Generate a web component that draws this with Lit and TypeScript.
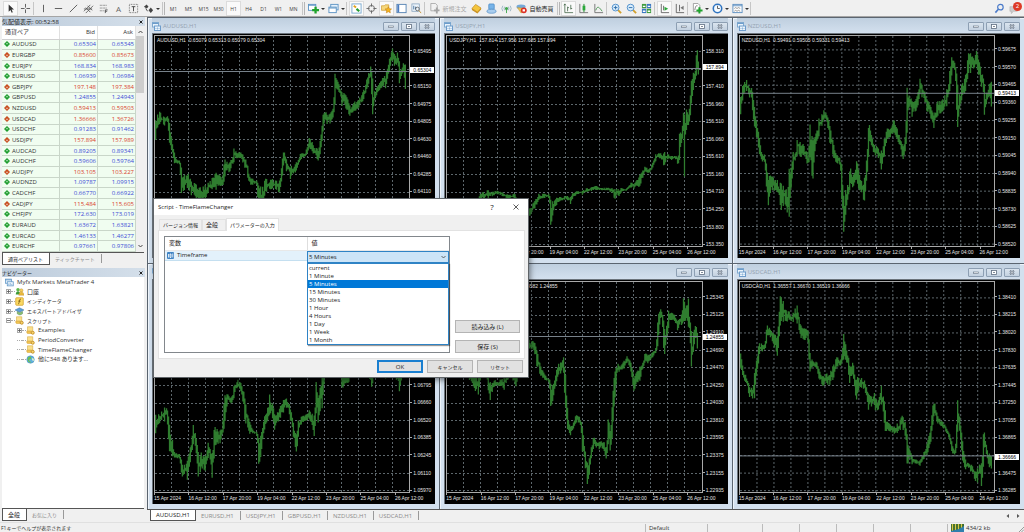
import { LitElement, html, css, svg, nothing } from "lit";
import { customElement, property } from "lit/decorators.js";
import { classMap } from "lit/directives/class-map.js";
import { styleMap } from "lit/directives/style-map.js";

type Bar = [number, number, number];

interface Chart {
  symbol: string;
  quote: string;
  scale: string[];
  price?: string;
  priceAt: number;
  high?: boolean;
  origin: [number, number];
  bars: Bar[];
}

const PLOT_W = 770;
const PLOT_H = 634;
const TIMES = ["15 Apr 2024", "16 Apr 12:00", "17 Apr 20:00", "19 Apr 04:00", "22 Apr 12:00", "23 Apr 20:00", "25 Apr 04:00", "26 Apr 12:00"];

const CHARTS: Chart[] = [
  {
    symbol: "AUDUSD,H1", quote: "0.65079 0.65313 0.65079 0.65304", price: "0.65304", priceAt: 106, origin: [12, 46],
    scale: ["0.65495", "", "0.65150", "0.64975", "0.64805", "0.64630", "0.64460", "0.64285", "0.64110", "0.63940", "0.63765", "0.63595"],
    bars: [[12,300,370],[16,280,330],[25,270,310],[35,285,315],[48,285,305],[52,320,365],[58,340,395],[65,360,420],[68,415,430],[85,420,435],[90,460,520],[97,465,515],[110,460,510],[120,480,520],[130,485,530],[145,500,545],[155,500,545],[162,490,540],[170,490,520],[185,470,510],[195,455,500],[205,460,500],[215,470,515],[220,415,450],[235,430,460],[248,385,430],[255,390,415],[265,395,415],[275,400,420],[285,415,445],[292,440,480],[300,475,495],[318,480,495],[322,490,560],[335,500,560],[345,475,520],[360,475,510],[375,480,510],[388,480,520],[395,420,470],[400,388,430],[408,420,455],[420,440,470],[435,430,460],[450,400,420],[465,400,410],[478,350,385],[488,370,400],[500,385,420],[508,380,410],[514,320,380],[518,280,320],[525,275,300],[540,280,310],[550,260,295],[555,155,220],[565,185,210],[575,210,245],[590,225,270],[600,255,290],[612,245,275],[625,240,265],[640,210,245],[655,165,200],[664,130,170],[668,240,290],[675,210,240],[685,195,215],[695,180,205],[712,150,190],[720,110,150],[728,80,120],[735,100,140],[745,90,130],[750,140,190],[762,125,155],[769,130,220]],
  },
  {
    symbol: "USDJPY,H1", quote: "157.814 157.956 157.685 157.894", price: "157.894", priceAt: 97, origin: [25, 46],
    scale: ["158.310", "", "157.410", "156.960", "156.510", "156.060", "155.610", "155.160", "154.710", "154.250", "153.800", "153.350"],
    bars: [[25,560,575],[115,540,550],[125,520,535],[133,515,540],[145,510,530],[160,515,530],[175,512,522],[190,518,530],[210,525,538],[228,520,535],[240,550,580],[275,565,590],[290,540,560],[300,520,540],[315,522,535],[332,520,535],[335,535,570],[338,570,645],[343,545,570],[352,535,560],[365,530,545],[385,528,540],[398,530,550],[402,520,540],[415,515,525],[435,512,522],[445,505,518],[460,502,512],[475,498,512],[490,505,512],[505,503,512],[520,505,515],[528,505,535],[540,508,530],[550,505,515],[565,508,514],[580,488,505],[595,485,500],[605,470,505],[615,450,480],[622,440,455],[635,448,460],[645,430,445],[655,400,420],[665,400,412],[680,395,440],[690,400,420],[700,408,418],[715,408,418],[724,405,430],[727,340,370],[735,310,370],[739,275,330],[742,280,475],[746,270,310],[752,260,330],[758,240,290],[763,180,220],[768,155,185],[775,150,165],[779,80,155],[782,80,165],[786,138,165]],
  },
  {
    symbol: "NZDUSD,H1", quote: "0.59491 0.59505 0.59331 0.59413", price: "0.59413", priceAt: 173, high: true, origin: [25, 46],
    scale: ["0.59675", "0.59570", "0.59465", "0.59360", "0.59255", "0.59150", "0.59045", "0.58940", "0.58835", "0.58730", "0.58625", "0.58520"],
    bars: [[25,230,290],[30,200,235],[35,165,220],[42,170,215],[50,195,225],[58,200,235],[65,245,320],[72,290,350],[78,310,380],[83,390,415],[90,405,425],[98,400,430],[103,430,500],[108,470,565],[115,460,530],[122,470,510],[130,480,515],[137,475,520],[145,480,560],[153,490,560],[162,500,560],[168,520,590],[171,430,635],[176,430,475],[183,395,455],[190,400,425],[197,350,400],[205,365,410],[215,370,405],[225,390,430],[230,400,460],[235,310,370],[243,340,525],[248,340,370],[255,330,370],[262,295,350],[270,280,320],[277,265,300],[288,285,310],[297,320,370],[305,360,410],[315,405,430],[325,410,435],[332,420,560],[338,570,660],[343,510,560],[350,490,545],[357,440,490],[365,470,510],[375,410,480],[383,450,520],[392,485,520],[400,470,550],[407,410,480],[413,300,370],[418,330,370],[427,370,400],[440,380,405],[450,390,455],[460,350,400],[468,325,360],[478,325,355],[488,295,340],[497,320,355],[505,340,375],[515,385,415],[525,340,380],[528,190,260],[535,225,265],[545,240,280],[555,240,275],[563,205,260],[568,170,230],[575,195,225],[583,210,250],[592,240,270],[602,260,300],[610,285,325],[620,240,290],[635,240,275],[648,210,265],[658,140,220],[665,105,150],[673,125,150],[678,90,280],[681,260,330],[687,220,280],[695,190,230],[705,170,220],[715,95,160],[722,90,140],[730,110,150],[738,85,130],[745,110,170],[752,140,190],[758,120,220],[763,230,285],[770,210,240],[778,190,230],[784,175,260]],
  },
  {
    symbol: "EURUSD,H1", quote: "1.06939 1.06984 1.06900 1.06939", priceAt: -1, origin: [462, -281],
    scale: ["1.07485", "1.07350", "1.07210", "1.07070", "1.06935", "1.06795", "1.06660", "1.06520", "1.06385", "1.06245", "1.06110", "1.05970"],
    bars: [[462,120,185],[470,115,150],[480,105,140],[490,95,130],[497,85,130],[500,130,190],[505,160,255],[512,180,250],[518,235,250],[535,235,255],[542,270,310],[550,270,300],[557,260,325],[565,230,270],[572,180,220],[575,140,190],[582,170,215],[587,200,240],[592,230,330],[600,230,280],[610,245,290],[620,200,250],[628,225,260],[633,230,315],[640,150,210],[648,160,205],[656,160,215],[665,150,190],[670,60,100],[680,55,75],[692,65,90],[700,30,60],[710,10,35],[718,20,45],[728,40,80],[735,80,150],[745,130,170],[755,165,175],[770,170,185],[775,200,295],[782,170,230],[790,130,170],[800,100,145],[808,45,120],[815,80,120],[820,110,180],[830,110,145],[840,90,130],[848,75,115],[858,70,100],[868,85,125],[875,120,150],[880,160,200],[887,180,245],[893,135,165],[903,125,150],[915,120,140],[928,105,135],[938,120,160],[942,110,190],[948,20,100],[955,70,130],[965,-10,120],[975,-100,-60],[1000,-50,-20],[1020,-20,10],[1030,0,35],[1045,0,25],[1060,-40,-10],[1100,-30,0],[1117,-10,40],[1125,-40,-10],[1190,-30,10],[1200,-10,50],[1208,-60,-10],[1220,-80,-40]],
  },
  {
    symbol: "GBPUSD,H1", quote: "1.24868 1.24920 1.24582 1.24855", price: "1.24855", priceAt: 166, origin: [25, 64],
    scale: ["1.25345", "1.25125", "1.24910", "1.24690", "1.24470", "1.24250", "1.24030", "1.23810", "1.23595", "1.23375", "1.23155", "1.22935"],
    bars: [[25,300,340],[60,300,340],[100,340,370],[107,350,390],[118,340,415],[125,320,350],[145,330,360],[153,360,425],[165,360,380],[185,358,378],[195,350,395],[210,320,345],[230,340,380],[240,300,330],[270,235,265],[280,240,270],[290,245,275],[297,270,320],[305,310,345],[320,345,360],[333,350,370],[338,380,460],[345,370,410],[352,340,380],[360,310,345],[368,300,345],[375,270,320],[380,340,430],[383,430,490],[388,480,510],[395,500,525],[405,490,510],[413,465,490],[425,470,490],[432,500,555],[437,540,590],[443,580,640],[448,600,680],[454,590,640],[460,560,585],[467,530,560],[475,545,565],[485,545,565],[497,545,570],[505,555,600],[512,465,550],[518,500,560],[523,440,510],[528,330,410],[532,325,395],[540,310,330],[550,315,330],[560,300,325],[567,285,310],[578,300,325],[585,330,380],[592,345,380],[600,330,370],[607,320,365],[615,310,330],[623,275,305],[632,285,305],[645,275,295],[655,260,280],[662,170,220],[668,140,175],[675,150,180],[680,220,300],[687,200,245],[693,150,180],[700,155,180],[710,160,180],[722,180,205],[732,165,195],[740,100,190],[745,150,185],[754,100,200],[758,180,230],[763,280,320],[770,200,240],[776,185,215],[782,215,290]],
  },
  {
    symbol: "USDCAD,H1", quote: "1.36557 1.36670 1.36519 1.36666", price: "1.36666", priceAt: 525, origin: [25, 64],
    scale: ["1.38410", "1.38215", "1.38020", "1.37830", "1.37635", "1.37445", "1.37250", "1.37055", "1.36865", "", "1.36475", "1.36285"],
    bars: [[25,280,330],[30,320,345],[40,340,370],[50,375,405],[58,380,410],[66,340,430],[72,300,360],[80,245,285],[90,250,275],[98,250,270],[105,190,225],[115,205,235],[125,220,255],[137,220,295],[140,140,210],[145,100,165],[153,110,185],[162,145,185],[172,150,180],[183,160,185],[195,125,190],[205,190,220],[218,200,245],[228,195,240],[235,280,335],[242,300,320],[255,300,325],[263,330,360],[275,345,380],[285,340,370],[297,330,365],[305,310,360],[315,290,320],[328,295,320],[337,215,300],[345,260,300],[355,320,370],[365,300,345],[375,350,430],[380,350,400],[390,350,385],[400,360,385],[412,400,450],[422,410,440],[430,395,440],[440,430,455],[450,365,430],[457,405,460],[463,480,520],[475,490,515],[490,500,525],[500,490,515],[508,475,515],[515,465,490],[525,485,550],[528,560,615],[535,565,600],[545,595,610],[555,600,612],[568,600,622],[580,575,600],[590,545,575],[600,510,560],[605,440,500],[612,425,460],[620,465,490],[635,485,500],[645,495,515],[655,515,535],[665,560,580],[675,570,595],[678,470,560],[682,420,470],[687,460,510],[692,520,560],[697,580,605],[705,610,630],[715,610,625],[725,615,635],[735,635,665],[742,625,670],[750,610,640],[754,600,680],[760,520,580],[764,515,550],[770,570,595],[777,580,625],[784,585,628]],
  },
];

/* Hourly high/low sticks interpolated between the key bars, each with a little deterministic noise. */
function sticks(chart: Chart): string {
  const [ox, oy] = chart.origin;
  const out: string[] = [];
  let seed = 7;
  const rand = () => (seed = (seed * 16807) % 2147483647) / 2147483647;
  let k = 0;
  let prev = NaN;
  const end = chart.bars[chart.bars.length - 1][0];
  for (let x = chart.bars[0][0]; x <= end; x += 3) {
    while (k < chart.bars.length - 2 && chart.bars[k + 1][0] <= x) k++;
    const a = chart.bars[k];
    const b = chart.bars[k + 1];
    const t = Math.min(1, (x - a[0]) / (b[0] - a[0]));
    const top = a[1] + (b[1] - a[1]) * t;
    const bottom = a[2] + (b[2] - a[2]) * t;
    const near = t < 0.25 || t > 0.85;
    const span = bottom - top;
    let hi = top + span * rand() * (near ? 0.15 : 0.5);
    let lo = bottom - span * rand() * (near ? 0.15 : 0.5);
    if (rand() > 0.9) lo += span * 0.3;
    if (!Number.isNaN(prev)) {
      if (prev < hi) hi = prev;
      if (prev > lo) lo = prev;
    }
    prev = hi + (lo - hi) * (0.3 + rand() * 0.4);
    out.push(`M${x - ox + 2} ${(hi - oy).toFixed(0)}V${(lo - oy).toFixed(0)}`);
  }
  return out.join("");
}

const FONT = css`
  * { box-sizing: border-box; }
  button, select, input { font: inherit; color: inherit; margin: 0; padding: 0; border: 0; background: none; border-radius: 0; appearance: none; }
  svg { display: block; }
`;

@customElement("chart-window")
class ChartWindow extends LitElement {
  @property({ attribute: false }) chart!: Chart;

  static styles = [FONT, css`
    :host { display: flex; flex-direction: column; min-width: 0; min-height: 0; padding: 0 4px 5px 4px; background: #d3e0ee; border-left: 1px solid #5b6570; border-top: 1px solid #5b6570; box-shadow: inset 1px 1px 0 #eef4fa; }
    .title { display: flex; align-items: center; gap: 2px; height: 15px; padding-top: 1px; flex: none; color: #94a2b1; background: linear-gradient(#bfcfdf, #d3e0ee); font-size: 6px; }
    .title svg { width: 9px; height: 9px; }
    .name { flex: 1; }
    .ctl { width: 16px; height: 9px; border: 1px solid #8d9fb3; border-radius: 1px; background: linear-gradient(#dbe5ef, #c3d1e0); display: grid; place-items: center; }
    .ctl svg { width: 6px; height: 5px; }
    .body { flex: 1; min-height: 0; background: #000; color: #e4e4e4; font: 5px/6px "Liberation Sans", Arial, sans-serif; display: grid; grid-template-columns: minmax(0, 1fr) 25px; grid-template-rows: minmax(0, 1fr) 11px; padding: 1px 0 0 1px; border-left: 1px solid #6c747c; border-top: 1px solid #6c747c; }
    .plot { grid-area: 1 / 1; min-width: 0; min-height: 0; position: relative; border: 1px solid #a9a9a9; }
    .plot svg { width: 100%; height: 100%; }
    .quote { position: absolute; left: 2px; top: 1px; white-space: pre; }
    .scale { grid-area: 1 / 2 / 3 / 3; display: flex; flex-direction: column; padding: 7px 0 5px 0; }
    .scale.high { padding-top: 5px; }
    .tick { flex: 1; display: flex; align-items: center; gap: 1px; }
    .tick::before { content: ""; width: 2px; border-top: 1px solid #a9a9a9; }
    .area { grid-area: 1 / 2; position: relative; }
    .price { position: absolute; left: 0; right: 1px; margin-top: -3px; background: #fff; color: #000; padding-left: 3px; }
    .times { grid-area: 2 / 1 / 3 / 3; display: grid; grid-template-columns: repeat(8, minmax(0, 1fr)); padding-right: 6px; }
    .time { white-space: nowrap; padding-top: 2px; position: relative; }
    .time::before { content: ""; position: absolute; left: 0; top: 0; height: 2px; border-left: 1px solid #a9a9a9; }
  `];

  render() {
    const c = this.chart;
    const first = c.high ? 42 : 48;
    const step = c.high ? 53.3 : 52.9;
    return html`
      <div class="title">
        <svg viewBox="0 0 9 9"><rect x=".5" y=".5" width="6" height="4.5" fill="#eaf4fc" stroke="#7fa9cf"/><path d="M.5 1.5h6" stroke="#6d9ccb"/><rect x="2.5" y="4" width="6" height="4.5" fill="#eaf4fc" stroke="#6d9ccb"/><path d="M4 7V6M5.5 7.5V5.500M7 7V6" stroke="#6d9ccb" stroke-width=".7"/></svg>
        <span class="name">${c.symbol}</span>
        <button class="ctl" aria-label="Minimize"><svg viewBox="0 0 6 5"><rect x=".5" y="2" width="5" height="1.500" fill="#fff" stroke="#5f6e80" stroke-width=".6"/></svg></button>
        <button class="ctl" aria-label="Maximize"><svg viewBox="0 0 6 5"><rect x=".5" y=".5" width="5" height="4" fill="#fff" stroke="#5f6e80" stroke-width=".8"/><path d="M2 2.500h2" stroke="#5f6e80" stroke-width=".8"/></svg></button>
        <button class="ctl" aria-label="Close"><svg viewBox="0 0 6 5"><path d="M1 .5l4 4M5 .5l-4 4" stroke="#5f6e80" stroke-width="1.800"/><path d="M1 .5l4 4M5 .5l-4 4" stroke="#fff" stroke-width=".7"/></svg></button>
      </div>
      <div class="body">
        <div class="plot">
          <svg viewBox="0 0 ${PLOT_W} ${PLOT_H}" preserveAspectRatio="none">
            <g stroke="#5d676c" stroke-width="1" stroke-dasharray="2 2" shape-rendering="crispEdges">
              ${Array.from({ length: 14 }, (_, i) => svg`<path vector-effect="non-scaling-stroke" d="M${(i + 1) * 51.4} 0V${PLOT_H}"/>`)}
              ${Array.from({ length: 12 }, (_, i) => svg`<path vector-effect="non-scaling-stroke" d="M0 ${first + i * step}H${PLOT_W}"/>`)}
            </g>
            <path d=${sticks(c)} fill="none" stroke="#2f7d2f" stroke-width="1.300" vector-effect="non-scaling-stroke"/>
            ${c.price ? svg`<path vector-effect="non-scaling-stroke" shape-rendering="crispEdges" stroke="#77818a" d="M0 ${c.priceAt}H${PLOT_W}"/>` : nothing}
          </svg>
          <div class="quote">${c.symbol}  ${c.quote}</div>
        </div>
        <div class=${classMap({ scale: true, high: !!c.high })}>${c.scale.map((s) => html`<div class="tick">${s}</div>`)}</div>
        <div class="area">${c.price ? html`<div class="price" style=${styleMap({ top: `${(c.priceAt / PLOT_H) * 100}%` })}>${c.price}</div>` : nothing}</div>
        <div class="times">${TIMES.map((t) => html`<div class="time">${t}</div>`)}</div>
      </div>`;
  }
}

const ICONS: Record<string, unknown> = {
  cursor: svg`<path d="M4 1.500v8l2-2 1.300 3 1.200-.5-1.300-2.900h2.600z" fill="#333"/>`,
  cross: svg`<path d="M6 1v4M6 7v4M1 6h4M7 6h4" stroke="#555"/>`,
  vline: svg`<path d="M6 2v8" stroke="#555"/>`,
  hline: svg`<path d="M2 6h8" stroke="#555"/>`,
  trend: svg`<path d="M2 10l8-8" stroke="#555"/>`,
  channel: svg`<path d="M1 9l7-7M3 11l8-8M3 5l5 5M5 3l5 5M1 6.500h9" stroke="#555" stroke-width=".9"/>`,
  fibo: svg`<path d="M2 2.500h8M2 5.500h8M2 8.500h5" stroke="#777" stroke-dasharray="1 .6"/><path d="M8 11V7.500h2.500M8 9h2" stroke="#444" fill="none" stroke-width=".9"/>`,
  label: svg`<rect x="1.500" y="1.500" width="9" height="9" fill="none" stroke="#777" stroke-dasharray="1 .8"/><path d="M4 4h4M6 4v5" stroke="#444"/>`,
  arrows: svg`<path d="M1 4l3-2.500L6 4 4 6z" fill="#444"/><path d="M6 8l2.500-3L11 8l-2.500 3z" fill="#444"/><path d="M3 6l2 3" stroke="#444"/>`,
  newchart: svg`<rect x=".5" y="1.500" width="8" height="6.500" fill="#fff" stroke="#5b93c4"/><path d="M.5 2.500h8" stroke="#5b93c4"/><path d="M7 4h2.500v2.500H12V9H9.500v2.500H7V9H4.500V6.500H7z" fill="#1fa32c"/>`,
  profiles: svg`<rect x="3" y="1.500" width="8" height="6" fill="#e6f2fc" stroke="#5b93c4"/><rect x="1" y="4.500" width="8" height="6" fill="#fff" stroke="#5b93c4"/><path d="M1 5.500h8" stroke="#5b93c4"/>`,
  market: svg`<rect x="1" y="1" width="10" height="10" fill="#fff" stroke="#78a8cf"/><path d="M3 3l2.500 2" stroke="#e0a21b" stroke-width="2"/><path d="M6 6.500l3 2.500" stroke="#239b30" stroke-width="2.400"/>`,
  target: svg`<circle cx="6" cy="6" r="3.300" fill="none" stroke="#666"/><path d="M6 .5v3.500M6 8v3.500M.5 6H4M8 6h3.500" stroke="#666"/>`,
  navigator: svg`<path d="M.5 3h3l1-1h4v6h-8z" fill="#f6d77a" stroke="#c9952a" stroke-width=".7"/><path d="M8 4l1 2.200 2.500.3-1.800 1.700.5 2.500L8 9.500l-2.200 1.200.5-2.500L4.500 6.500 7 6.200z" fill="#f5b521" stroke="#c07a0e" stroke-width=".6"/>`,
  terminal: svg`<rect x="1" y="1.500" width="10" height="9" fill="#fff" stroke="#5583b3"/><path d="M2.500 2v8" stroke="#4a7cc0" stroke-width="2"/>`,
  tester: svg`<rect x="1" y="1" width="8" height="8" fill="#eef5fb" stroke="#7d9cba" stroke-width=".8"/><path d="M3 7V3M5 7V4" stroke="#45729f"/><circle cx="7" cy="6.500" r="2" fill="none" stroke="#555" stroke-width=".8"/><path d="M8.500 8l2.500 3" stroke="#c49232"/>`,
  order: svg`<path d="M2 .5h5l2 2v6H2z" fill="#f2f2f2" stroke="#999" stroke-width=".8"/><path d="M7.500 5h2v2h2v2h-2v2.500h-2V9h-2V7h2z" fill="#a5a5a5"/>`,
  gold: svg`<path d="M1 6l4-4.500 6 4-4 4.500z" fill="#f4c53d" stroke="#bd8415" stroke-width=".7"/><path d="M1 6v1.500l6 4V10zM7 10v1.500l4-4.500V5.500z" fill="#c98f1a"/>`,
  editor: svg`<rect x="3" y="1" width="6" height="6" rx="1" fill="#78b4e8" stroke="#3c7fbf" stroke-width=".7"/><ellipse cx="6" cy="9" rx="5" ry="2.200" fill="#a9cdee" stroke="#4e8cc4" stroke-width=".7"/>`,
  signal: svg`<path d="M2 3a5 5 0 000 6M10 3a5 5 0 010 6M4 4a3.500 3.500 0 000 4M8 4a3.500 3.500 0 010 4" stroke="#9ab5c4" fill="none"/><circle cx="6" cy="6" r="1.700" fill="#3fa54b"/><path d="M6 7v4" stroke="#3fa54b"/>`,
  auto: svg`<ellipse cx="5.500" cy="4" rx="5" ry="2.500" fill="#74a9d8"/><path d="M1.500 5l4 6 5-5z" fill="#f0c552" stroke="#b98d28" stroke-width=".5"/><circle cx="8.500" cy="8" r="3.200" fill="#dc2f24"/><rect x="7.200" y="6.800" width="2.600" height="2.400" fill="#fff"/>`,
  bars: svg`<path d="M2 1v9.500h9M2 1L1 2.500M2 1l1 1.500M5 9V4M5 5h1.500M8.500 7V2M8.500 6H10" stroke="#4a6b4e" fill="none" stroke-width=".9"/>`,
  candles: svg`<path d="M2 1v9.500h9" stroke="#666" fill="none" stroke-width=".9"/><path d="M6.500 1v9" stroke="#1f8a2c"/><rect x="5" y="3" width="3" height="5" fill="#2ba83a"/>`,
  line: svg`<path d="M2 1v9.500h9" stroke="#666" fill="none" stroke-width=".9"/><path d="M3 8c2-6 4-3 7 1" stroke="#3b8d45" fill="none" stroke-width=".9"/>`,
  zoomin: svg`<path d="M7.500 7.500L11 11" stroke="#d2a02d" stroke-width="2"/><circle cx="5" cy="5" r="3.700" fill="#d8ecfb" stroke="#4b8cc9"/><path d="M3 5h4M5 3v4" stroke="#2e6cab"/>`,
  zoomout: svg`<path d="M7.500 7.500L11 11" stroke="#d2a02d" stroke-width="2"/><circle cx="5" cy="5" r="3.700" fill="#d8ecfb" stroke="#4b8cc9"/><path d="M3 5h4" stroke="#2e6cab"/>`,
  tile: svg`<rect x="1" y="1" width="4.700" height="4.700" fill="#3f9c3f"/><rect x="6.300" y="1" width="4.700" height="4.700" fill="#3a78c2"/><rect x="1" y="6.300" width="4.700" height="4.700" fill="#3a78c2"/><rect x="6.300" y="6.300" width="4.700" height="4.700" fill="#3f9c3f"/><path d="M2 3.700h2.800M7.300 3.700h2.800M2 9h2.800M7.300 9h2.800" stroke="#fff" stroke-width="1.500"/>`,
  scroll: svg`<path d="M2.500 1v9.500H11M5 8V3" stroke="#555" fill="none" stroke-width=".9"/><path d="M6 4l4 2.300L6 8.500z" fill="#2ba83a"/>`,
  shift: svg`<path d="M2.500 1v9.500H11M6 9V2" stroke="#555" fill="none" stroke-width=".9"/><path d="M10.500 3L7 5.200l3.500 2.300z" fill="#777"/>`,
  indicators: svg`<path d="M1.500.5h5l2 2v7h-7z" fill="#fff" stroke="#888" stroke-width=".8"/><path d="M3 8c1-6 2-5 3-5" stroke="#555" fill="none" stroke-width=".8"/><path d="M7 4.500h2.200V7h2.300v2.200H9.200v2.300H7V9.200H4.800V7H7z" fill="#1fa32c"/>`,
  clock: svg`<circle cx="6" cy="6" r="4.600" fill="#f4faff" stroke="#2f74c0" stroke-width="1.700"/><path d="M6 3v3h2.500" stroke="#555" fill="none"/>`,
  template: svg`<rect x="1" y="1.500" width="10" height="9" fill="#fff" stroke="#5b8ec0"/><path d="M1 3h10" stroke="#5b8ec0"/><path d="M2.500 6l1.500-1 1.500 1L7 5l2 1M2.500 9L4 8l1.500 1L7 8l2 1" stroke="#777" fill="none" stroke-width=".8"/>`,
  search: svg`<circle cx="7" cy="4.500" r="3" fill="none" stroke="#4a7ac9" stroke-width="1.300"/><path d="M5 6.500L1.500 10.500" stroke="#4a7ac9" stroke-width="1.700"/>`,
  bubble: svg`<path d="M1 4h8v5H5l-2.500 2.500V9H1z" fill="#ccc" stroke="#aaa" stroke-width=".6"/>`,
  terminals: svg`<rect x=".5" y="1.500" width="8" height="5.500" fill="#eaf4fc" stroke="#5b93c4"/><path d="M.5 2.500h8" stroke="#5b93c4"/><rect x="3" y="5" width="8" height="5.500" fill="#eaf4fc" stroke="#5b93c4"/><path d="M5 9V7.500M7 9V7M9 9V8" stroke="#5b93c4"/>`,
  account: svg`<circle cx="4" cy="3.500" r="2.300" fill="#5cb848"/><path d="M1 10c0-6 6-6 6 0z" fill="#3c9a37"/><circle cx="8.500" cy="4.500" r="2.200" fill="#f4ce5c" stroke="#b6882a" stroke-width=".5"/><path d="M5 11c0-6 7-6 7 0z" fill="#e9b93a" stroke="#b6882a" stroke-width=".5"/>`,
  indicator: svg`<rect x="1" y="1" width="10" height="10" rx="1" fill="#fbd964" stroke="#cf9c22"/><path d="M8 3c-2-.5-2 1-2.300 3S5 9.500 4 9M4.500 5.500h3" stroke="#6a4a00" fill="none"/>`,
  expert: svg`<path d="M0 4l6-3 6 3-6 3z" fill="#5d9fd6" stroke="#356fa5" stroke-width=".6"/><path d="M3 6v3c2 2 5 2 7 0V6L6 7.500z" fill="#8bbf6e" stroke="#4b8054" stroke-width=".6"/>`,
  script: svg`<path d="M2 1h7v6H2z" fill="#fbe08b" stroke="#d2a53a" stroke-width=".7"/><path d="M1 7h6v3H2.500A1.500 1.500 0 011 8.500z" fill="#f3c54f" stroke="#c9952a" stroke-width=".6"/><circle cx="9" cy="9" r="2" fill="#f8d36a" stroke="#b8831a"/>`,
  globe: svg`<circle cx="6" cy="6" r="5" fill="#5fb0dd" stroke="#3b83b5" stroke-width=".6"/><path d="M3 3c2-2 4-1 4 1S4 5 4 7s3 1 3 3c-4 1-6-4-4-7z" fill="#6cc04f"/><path d="M8 4l2.500 1v3L8 7z" fill="#d8f0c8"/>`,
};

const icon = (name: string) => html`<svg class="icon" viewBox="0 0 12 12" fill="none" aria-hidden="true">${ICONS[name]}</svg>`;

interface Tool { icon?: string; text?: string; name: string; caret?: boolean; on?: boolean; wide?: boolean; off?: boolean; letter?: boolean; period?: boolean }

const TOOLS: (Tool | "|" | "||")[] = [
  { icon: "cursor", name: "Cursor", on: true }, { icon: "cross", name: "Crosshair" }, "|",
  { icon: "vline", name: "Vertical line" }, { icon: "hline", name: "Horizontal line" }, { icon: "trend", name: "Trendline" },
  { icon: "channel", name: "Channel" }, { icon: "fibo", name: "Fibonacci" }, { text: "A", name: "Text", letter: true },
  { icon: "label", name: "Text label" }, { icon: "arrows", name: "Arrows", caret: true }, "||",
  ...["M1", "M5", "M15", "M30", "H1", "H4", "D1", "W1", "MN"].map((t) => ({ text: t, name: t, on: t === "H1", period: true })), "||",
  { icon: "newchart", name: "New chart", caret: true }, { icon: "profiles", name: "Profiles", caret: true }, "|",
  { icon: "market", name: "Market watch", on: true }, { icon: "target", name: "Data window" }, { icon: "navigator", name: "Navigator", on: true },
  { icon: "terminal", name: "Terminal" }, { icon: "tester", name: "Strategy tester" }, "|",
  { icon: "order", text: "新規注文", name: "新規注文", wide: true, off: true }, { icon: "gold", name: "MetaEditor" }, { icon: "editor", name: "Hosting" },
  { icon: "signal", name: "Signals" }, { icon: "auto", text: "自動売買", name: "自動売買", wide: true }, "||",
  { icon: "bars", name: "Bar chart", on: true }, { icon: "candles", name: "Candlesticks" }, { icon: "line", name: "Line chart" }, "|",
  { icon: "zoomin", name: "Zoom in" }, { icon: "zoomout", name: "Zoom out" }, { icon: "tile", name: "Tile windows" }, "|",
  { icon: "scroll", name: "Auto scroll", on: true }, { icon: "shift", name: "Chart shift" }, "|",
  { icon: "indicators", name: "Indicators", caret: true }, { icon: "clock", name: "Periods", caret: true }, { icon: "template", name: "Templates", caret: true }, "|",
];

const QUOTES: [string, string, string, boolean][] = [
  ["AUDUSD", "0.65304", "0.65345", true], ["EURGBP", "0.85600", "0.85673", false], ["EURJPY", "168.834", "168.983", true],
  ["EURUSD", "1.06939", "1.06984", true], ["GBPJPY", "197.148", "197.384", false], ["GBPUSD", "1.24855", "1.24943", true],
  ["NZDUSD", "0.59413", "0.59503", false], ["USDCAD", "1.36666", "1.36726", false], ["USDCHF", "0.91283", "0.91462", true],
  ["USDJPY", "157.894", "157.989", false], ["AUDCAD", "0.89205", "0.89341", true], ["AUDCHF", "0.59606", "0.59764", true],
  ["AUDJPY", "103.105", "103.227", false], ["AUDNZD", "1.09787", "1.09915", true], ["CADCHF", "0.66770", "0.66922", true],
  ["CADJPY", "115.484", "115.605", false], ["CHFJPY", "172.630", "173.019", true], ["EURAUD", "1.63672", "1.63821", true],
  ["EURCAD", "1.46133", "1.46277", true], ["EURCHF", "0.97661", "0.97806", true],
];

const TREE: [number, string, string, string, boolean?][] = [
  [0, "", "terminals", "Myfx Markets MetaTrader 4"], [1, "+", "account", "口座"], [1, "+", "indicator", "インディケータ", true],
  [1, "+", "expert", "エキスパートアドバイザ", true], [1, "−", "script", "スクリプト", true], [2, "+", "script", "Examples"],
  [2, "", "script", "PeriodConverter"], [2, "", "script", "TimeFlameChanger"], [2, "", "globe", "他に348 あります..."],
];

const FRAMES = ["current", "1 Minute", "5 Minutes", "15 Minutes", "30 Minutes", "1 Hour", "4 Hours", "1 Day", "1 Week", "1 Month"];

@customElement("app-root")
class AppRoot extends LitElement {
  static styles = [FONT, css`
    :host { display: flex; flex-direction: column; height: 100vh; position: relative; overflow: hidden; background: #f0f0f0; color: #333; font: 6px/8px "Open Sans", "Noto Sans CJK JP", sans-serif; font-feature-settings: "palt"; }
    .icon { width: 11px; height: 11px; flex: none; }
    .kana { font-size: 5px; font-feature-settings: normal; }

    .toolbar { display: flex; align-items: center; height: 17px; flex: none; padding: 1px 4px 0 3px; border-bottom: 1px solid #a5a5a5; }
    .tool { display: flex; align-items: center; justify-content: center; width: 15px; height: 15px; flex: none; color: #666; }
    .tool.on { background: #fafafa; box-shadow: inset 0 0 0 1px #dcdcdc; }
    .tool.caret { width: 20px; gap: 2px; }
    .tool.caret::after { content: ""; border: 2px solid transparent; border-top-color: #333; border-bottom: 0; }
    .tool.wide { width: 42px; gap: 2px; color: #222; }
    .tool.off { color: #aaa; }
    .tool.period { font-size: 5px; color: #444; }
    .tool.letter { font-size: 8px; }
    .sep { width: 3px; height: 13px; flex: none; border-left: 1px solid #c6c6c6; }
    .sep.grip { width: 5px; border-left: 0; background: linear-gradient(90deg, transparent 1px, #c6c6c6 1px 2px, transparent 2px 3px, #b5b5b5 3px 4px, transparent 4px); }
    .right { margin-left: auto; display: flex; gap: 4px; }
    .note { position: relative; }
    .badge { position: absolute; left: 4px; top: -1px; width: 9px; height: 9px; border-radius: 50%; background: #dd3a26; color: #fff; text-align: center; }

    .main { flex: 1; min-height: 0; display: grid; grid-template-columns: 147px minmax(0, 1fr); }
    .side { display: flex; flex-direction: column; min-height: 0; padding: 0 2px 1px 2px; }
    .bar { display: flex; align-items: center; justify-content: space-between; height: 9px; flex: none; background: linear-gradient(90deg, #bccbdb, #d4dfea); color: #222; }
    .bar button { width: 9px; height: 8px; display: grid; place-items: center; }
    .bar svg { width: 4px; height: 4px; }
    .market { display: flex; height: 227px; flex: none; background: #fff; border-bottom: 1px solid #555; margin-right: 1px; }
    .quotes { flex: 1; border-collapse: collapse; height: 226px; table-layout: fixed; }
    .quotes th { font-weight: 400; text-align: left; padding: 0 2px 0 3px; height: 13px; border-right: 1px solid #e0e0e0; border-bottom: 1px solid #d0d0d0; }
    .quotes td { padding: 0 1px 0 2px; background: #f0fdf0; border-right: 1px solid #c9d6c9; border-bottom: 1px solid #c9d6c9; }
    .quotes .num { text-align: right; width: 38px; }
    .up .num { color: #3a49d6; }
    .down .num { color: #d9412b; }
    .pair { display: flex; align-items: center; gap: 2px; }
    .pair svg { width: 6px; height: 6px; }
    .scroll { width: 8px; display: flex; flex-direction: column; align-items: center; justify-content: space-between; background: #f0f0f0; padding: 4px 0; }
    .scroll svg { width: 5px; height: 4px; flex: none; }
    .thumb { width: 8px; height: 57px; background: #cdcdcd; margin: 2px 0 auto; }
    .tabs { display: flex; height: 12px; flex: none; color: #8a8a8a; }
    .tabs button { padding: 0 6px 0 5px; border-right: 1px solid #999; margin: 1px 0 2px; line-height: 8px; }
    .tabs .active { color: #222; background: #fff; border: 1px solid #555; border-top: 0; margin: 0; }
    .navbar { margin-top: 3px; }
    .tree { flex: 1; min-height: 0; margin: 0 1px 0 0; padding: 0 3px; background: #fff; border-bottom: 1px solid #555; list-style: none; display: grid; grid-auto-rows: 10px 9px 10px; align-content: start; }
    .node { display: flex; align-items: center; gap: 3px; white-space: nowrap; }
    .node .icon { width: 9px; height: 9px; }
    .d1 { padding-left: 1px; }
    .d2 { padding-left: 12px; }
    .box { width: 5px; height: 5px; border: 1px solid #aaa; background: #fff; color: #444; display: grid; place-items: center; }
    .box svg { width: 3px; height: 3px; }
    .stub { width: 5px; border-top: 1px dotted #aaa; }
    .link { border-top: 1px dotted #aaa; width: 4px; margin: 0 -3px; }

    .work { display: flex; flex-direction: column; min-width: 0; min-height: 0; }
    .windows { flex: 1; min-height: 0; display: grid; grid-template-columns: repeat(3, minmax(0, 1fr)); grid-template-rows: repeat(2, minmax(0, 1fr)); border-bottom: 1px solid #555; }
    .work .tabs { padding-left: 3px; padding-right: 4px; }
    .work .tabs .active { margin-bottom: 1px; padding-right: 5px; }
    .arrows { margin-left: auto; display: flex; align-items: center; gap: 8px; }
    .arrows svg { width: 3px; height: 4px; }

    .status { display: flex; align-items: center; height: 10px; flex: none; color: #333; border-top: 1px solid #e0e0e0; }
    .status span { border-left: 1px solid #bbb; height: 8px; width: 37px; padding-left: 3px; }
    .status .help { flex: 1; border: 0; padding-left: 1px; }
    .status .profile { width: 62px; }
    .status .bar-info { width: 55px; }
    .status .net { width: 77px; display: flex; align-items: center; gap: 2px; }
    .net svg { width: 13px; height: 8px; }
    .net .grip { margin-left: auto; width: 6px; }

    .dialog { position: absolute; left: 154px; top: 199px; width: 374px; background: #f0f0f0; outline: 1px solid #5f6468; box-shadow: 2px 3px 6px rgba(0, 0, 0, .5); color: #222; }
    .caption { display: flex; align-items: center; height: 16px; padding-left: 4px; background: #fff; }
    .caption b { font-weight: 400; flex: 1; }
    .caption button { width: 24px; height: 15px; display: grid; place-items: center; font-size: 8px; }
    .caption svg { width: 6px; height: 6px; }
    .pages { display: flex; align-items: flex-end; padding: 3px 0 0 5px; }
    .pages button { height: 11px; padding: 0 3px; border: 1px solid #e2e2e2; border-bottom: 0; }
    .pages .last { padding-right: 7px; }
    .pages .active { height: 13px; background: #fff; margin-bottom: -1px; }
    .page { display: flex; gap: 5px; height: 129px; margin: 0 3px 0 4px; padding: 5px 4px 5px 5px; background: #fff; border: 1px solid #e2e2e2; }
    .inputs { flex: 1; position: relative; border: 1px solid #82878c; }
    .params { width: 100%; border-collapse: collapse; table-layout: fixed; }
    .params th { font-weight: 400; text-align: left; height: 13px; padding: 0 4px; border-bottom: 1px solid #e8e8e8; }
    .params th + th { border-left: 1px solid #dedede; }
    .params td { padding: 0; height: 12px; vertical-align: top; }
    .var { display: flex; align-items: center; gap: 3px; height: 10px; padding-left: 2px; background: #e3f1fb; border-bottom: 1px solid #c4dff0; }
    .var svg { width: 7px; height: 7px; }
    .pick { position: relative; }
    .pick select { display: block; width: 100%; height: 12px; padding: 0 1px; background: #cce4f7; border: 1px solid #2f83c5; }
    .pick svg { position: absolute; right: 3px; top: 4px; width: 5px; height: 4px; }
    .list { position: absolute; right: 0; left: 142px; top: 26px; margin: 0; padding: 0; list-style: none; background: #fff; border: 1px solid #2f83c5; box-shadow: 1px 1px 1px rgba(0, 0, 0, .4); }
    .list li { height: 8px; padding-left: 1px; }
    .list .sel { background: #0078d7; color: #fff; }
    .files { width: 65px; display: flex; flex-direction: column; justify-content: flex-end; gap: 7px; }
    .btn { height: 13px; background: #e1e1e1; border: 1px solid #b4b4b4; }
    .foot { display: flex; justify-content: flex-end; gap: 4px; padding: 1px 5px 4px; }
    .foot .btn { width: 46px; }
    .foot .ok { border: 2px solid #1a7fd0; }
  `];

  private tool(t: Tool | "|" | "||") {
    if (t === "|" || t === "||") return html`<span class=${classMap({ sep: true, grip: t === "||" })}></span>`;
    return html`<button class=${classMap({ tool: true, on: !!t.on, caret: !!t.caret, wide: !!t.wide, off: !!t.off, letter: !!t.letter, period: !!t.period })} aria-label=${t.name}>${t.icon ? icon(t.icon) : nothing}${t.text ?? nothing}</button>`;
  }

  private close() {
    return html`<svg viewBox="0 0 4 4"><path d="M.5.5l3 3M3.500.5l-3 3" stroke="#222"/></svg>`;
  }

  render() {
    return html`
      <div class="toolbar">
        ${TOOLS.map((t) => this.tool(t))}
        <div class="right">${icon("search")}<div class="note">${icon("bubble")}<span class="badge">2</span></div></div>
      </div>
      <div class="main">
        <div class="side">
          <div class="bar"><span>気配値表示: 00:52:58</span><button aria-label="Close">${this.close()}</button></div>
          <div class="market">
            <table class="quotes">
              <thead><tr><th>通貨ペア</th><th class="num">Bid</th><th class="num">Ask</th></tr></thead>
              <tbody>${QUOTES.map(([pair, bid, ask, up]) => html`
                <tr class=${up ? "up" : "down"}>
                  <td><div class="pair"><svg viewBox="0 0 6 6"><path d="M3 0l3 3-3 3-3-3z" fill=${up ? "#1c9c2c" : "#c74a1b"}/><path d=${up ? "M3 1.500l1.500 1.800h-3z" : "M3 4.500L1.500 2.700h3z"} fill="#fff" opacity=".6"/></svg>${pair}</div></td>
                  <td class="num">${bid}</td><td class="num">${ask}</td>
                </tr>`)}
              </tbody>
            </table>
            <div class="scroll">
              <svg viewBox="0 0 5 4"><path d="M.5 3l2-2 2 2" fill="none" stroke="#444"/></svg>
              <div class="thumb"></div>
              <svg viewBox="0 0 5 4"><path d="M.5 1l2 2 2-2" fill="none" stroke="#444"/></svg>
            </div>
          </div>
          <div class="tabs"><button class="active kana">通貨ペアリスト</button><button class="kana">ティックチャート</button></div>
          <div class="bar navbar"><span class="kana">ナビゲーター</span><button aria-label="Close">${this.close()}</button></div>
          <ul class="tree">
            ${TREE.map(([depth, sign, name, text, kana]) => html`
              <li class="node d${depth}">
                ${sign ? html`<span class="box"><svg viewBox="0 0 3 3"><path d=${sign === "+" ? "M0 1.500h3M1.500 0v3" : "M0 1.500h3"} stroke="#555" stroke-width=".8"/></svg></span><span class="link"></span>`
                  : depth ? html`<span class="stub"></span><span class="link"></span>` : nothing}
                ${icon(name)}<span class=${kana ? "kana" : ""}>${text}</span>
              </li>`)}
          </ul>
          <div class="tabs"><button class="active">全般</button><button class="kana">お気に入り</button></div>
        </div>
        <div class="work">
          <div class="windows">${CHARTS.map((c) => html`<chart-window .chart=${c}></chart-window>`)}</div>
          <div class="tabs">
            ${["AUDUSD,H1", "EURUSD,H1", "USDJPY,H1", "GBPUSD,H1", "NZDUSD,H1", "USDCAD,H1"].map((t, i) => html`<button class=${i ? "" : "active"}>${t}</button>`)}
            <div class="arrows"><svg viewBox="0 0 3 4"><path d="M3 0v4L.5 2z" fill="#555"/></svg><svg viewBox="0 0 3 4"><path d="M0 0v4l2.500-2z" fill="#555"/></svg></div>
          </div>
        </div>
      </div>
      <div class="status">
        <span class="help kana">F1キーでヘルプが表示されます</span>
        <span class="profile">Default</span><span class="bar-info"></span><span></span><span></span><span></span><span></span><span></span>
        <span class="net"><svg viewBox="0 0 13 8"><rect width="13" height="8" fill="#3a6a2c"/><path d="M1.500 0v8M4.500 0v8M7.500 0v8M10.500 0v8" stroke="#d8c94a" stroke-width="1.200"/><path d="M0 7l4-1 4-1 5-3v6H0z" fill="#2f7fae"/></svg>434/2 kb<svg class="grip" viewBox="0 0 6 8"><path d="M1 8l5-5M3.500 8L6 5.500" stroke="#999"/></svg></span>
      </div>

      <div class="dialog" role="dialog" aria-label="Script - TimeFlameChanger">
        <div class="caption"><b>Script - TimeFlameChanger</b><button aria-label="Help">?</button><button aria-label="Close"><svg viewBox="0 0 6 6"><path d="M.5.5l5 5M5.500.5l-5 5" stroke="#333" stroke-width=".8"/></svg></button></div>
        <div class="pages"><button class="kana">バージョン情報</button><button class="last">全般</button><button class="active kana">パラメーターの入力</button></div>
        <div class="page">
          <div class="inputs">
            <table class="params">
              <thead><tr><th>変数</th><th>値</th></tr></thead>
              <tbody><tr>
                <td><label class="var" for="tf"><svg viewBox="0 0 7 7"><rect width="7" height="7" rx="1" fill="#3f83c4"/><path d="M1.500 2v3.500M3 2h1v3.500H3zM5.800 1.500v4" stroke="#fff" fill="none" stroke-width=".8"/></svg>Timeframe</label></td>
                <td><div class="pick"><select id="tf">${FRAMES.map((f) => html`<option ?selected=${f === "5 Minutes"}>${f}</option>`)}</select><svg viewBox="0 0 5 4"><path d="M.5 1l2 2 2-2" fill="none" stroke="#444" stroke-width=".8"/></svg></div></td>
              </tr></tbody>
            </table>
            <ul class="list" role="listbox" aria-label="Timeframe">${FRAMES.map((f) => html`<li role="option" class=${f === "5 Minutes" ? "sel" : ""}>${f}</li>`)}</ul>
          </div>
          <div class="files"><button class="btn">読み込み (L)</button><button class="btn">保存 (S)</button></div>
        </div>
        <div class="foot"><button class="btn ok">OK</button><button class="btn kana">キャンセル</button><button class="btn kana">リセット</button></div>
      </div>`;
  }
}
